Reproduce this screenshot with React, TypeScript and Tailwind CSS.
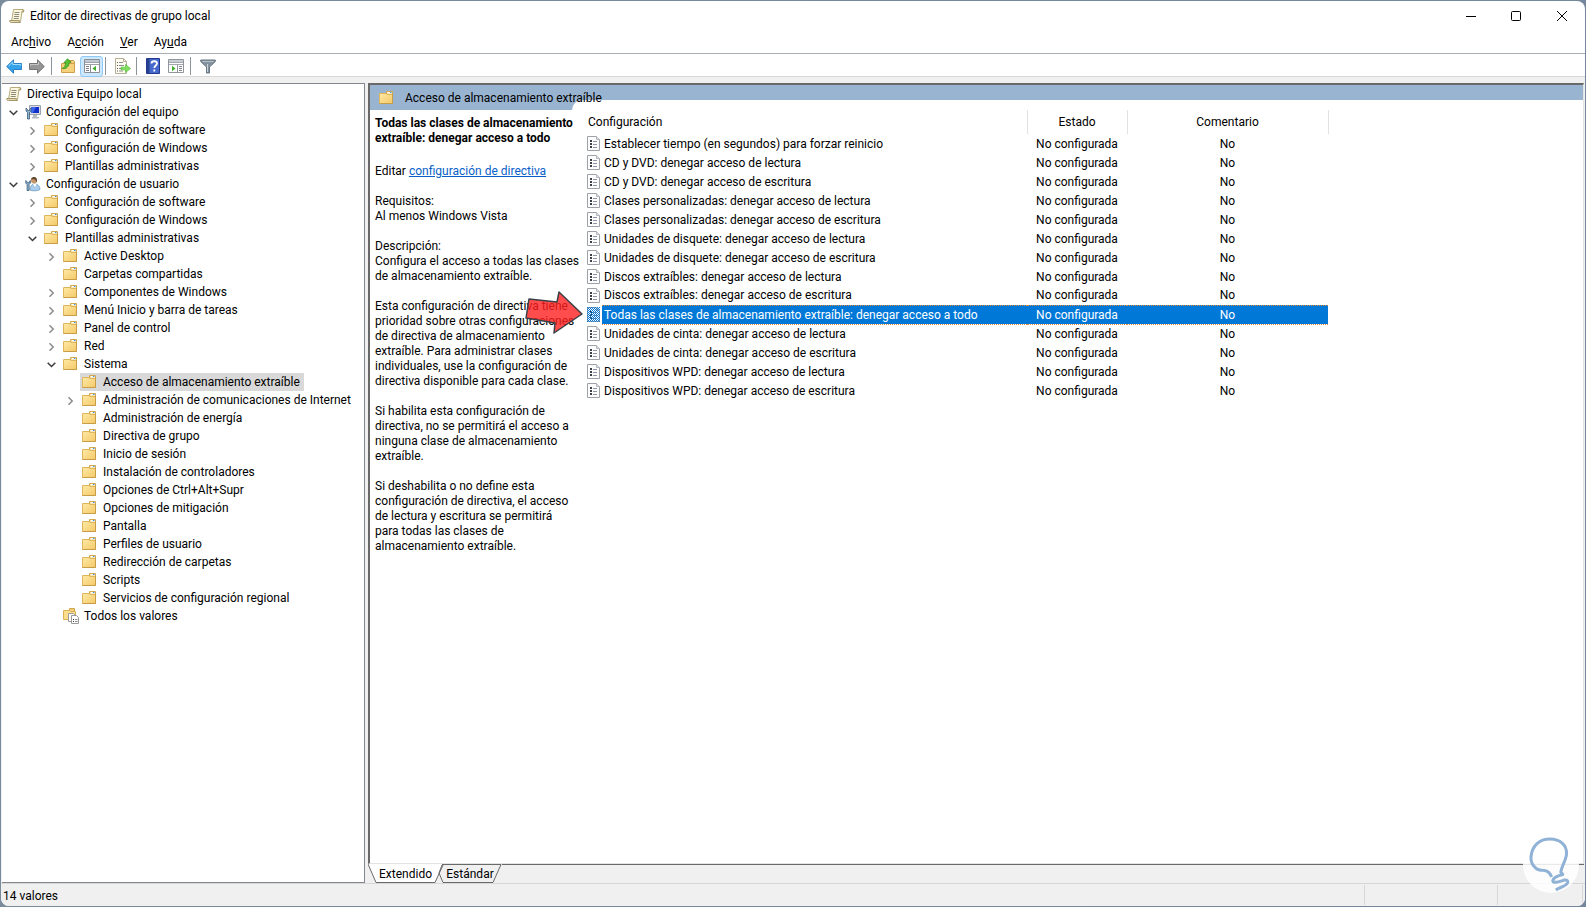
import React, { useState } from 'react';

type TreeItem = {
  label: string;
  level: number;
  icon: 'scroll' | 'computer' | 'user' | 'folder' | 'all';
  state?: 'open' | 'closed';
};

const tree: TreeItem[] = [
  { label: 'Directiva Equipo local', level: 0, icon: 'scroll' },
  { label: 'Configuración del equipo', level: 1, icon: 'computer', state: 'open' },
  { label: 'Configuración de software', level: 2, icon: 'folder', state: 'closed' },
  { label: 'Configuración de Windows', level: 2, icon: 'folder', state: 'closed' },
  { label: 'Plantillas administrativas', level: 2, icon: 'folder', state: 'closed' },
  { label: 'Configuración de usuario', level: 1, icon: 'user', state: 'open' },
  { label: 'Configuración de software', level: 2, icon: 'folder', state: 'closed' },
  { label: 'Configuración de Windows', level: 2, icon: 'folder', state: 'closed' },
  { label: 'Plantillas administrativas', level: 2, icon: 'folder', state: 'open' },
  { label: 'Active Desktop', level: 3, icon: 'folder', state: 'closed' },
  { label: 'Carpetas compartidas', level: 3, icon: 'folder' },
  { label: 'Componentes de Windows', level: 3, icon: 'folder', state: 'closed' },
  { label: 'Menú Inicio y barra de tareas', level: 3, icon: 'folder', state: 'closed' },
  { label: 'Panel de control', level: 3, icon: 'folder', state: 'closed' },
  { label: 'Red', level: 3, icon: 'folder', state: 'closed' },
  { label: 'Sistema', level: 3, icon: 'folder', state: 'open' },
  { label: 'Acceso de almacenamiento extraíble', level: 4, icon: 'folder' },
  { label: 'Administración de comunicaciones de Internet', level: 4, icon: 'folder', state: 'closed' },
  { label: 'Administración de energía', level: 4, icon: 'folder' },
  { label: 'Directiva de grupo', level: 4, icon: 'folder' },
  { label: 'Inicio de sesión', level: 4, icon: 'folder' },
  { label: 'Instalación de controladores', level: 4, icon: 'folder' },
  { label: 'Opciones de Ctrl+Alt+Supr', level: 4, icon: 'folder' },
  { label: 'Opciones de mitigación', level: 4, icon: 'folder' },
  { label: 'Pantalla', level: 4, icon: 'folder' },
  { label: 'Perfiles de usuario', level: 4, icon: 'folder' },
  { label: 'Redirección de carpetas', level: 4, icon: 'folder' },
  { label: 'Scripts', level: 4, icon: 'folder' },
  { label: 'Servicios de configuración regional', level: 4, icon: 'folder' },
  { label: 'Todos los valores', level: 3, icon: 'all' },
];

const policies = [
  'Establecer tiempo (en segundos) para forzar reinicio',
  'CD y DVD: denegar acceso de lectura',
  'CD y DVD: denegar acceso de escritura',
  'Clases personalizadas: denegar acceso de lectura',
  'Clases personalizadas: denegar acceso de escritura',
  'Unidades de disquete: denegar acceso de lectura',
  'Unidades de disquete: denegar acceso de escritura',
  'Discos extraíbles: denegar acceso de lectura',
  'Discos extraíbles: denegar acceso de escritura',
  'Todas las clases de almacenamiento extraíble: denegar acceso a todo',
  'Unidades de cinta: denegar acceso de lectura',
  'Unidades de cinta: denegar acceso de escritura',
  'Dispositivos WPD: denegar acceso de lectura',
  'Dispositivos WPD: denegar acceso de escritura',
];

const FolderIcon = () => (
  <svg width="16" height="16" viewBox="0 0 16 16" className="shrink-0">
    <defs>
      <linearGradient id="folder" x1="0" y1="0" x2="1" y2="1">
        <stop offset="0" stopColor="#ffe9a6" />
        <stop offset="1" stopColor="#f3c968" />
      </linearGradient>
    </defs>
    <path d="M7.500 4V1.500h6V6H7.500z" fill="#f2cf7c" stroke="#d3a74b" />
    <path d="M8.500 2h4.500v1.500H8.500z" fill="#fff" />
    <path d="M11 2h1.500v1H11z" fill="#3f8fe0" />
    <path d="M.5 3.500h6.500l1 1h5.500v9H.5z" fill="url(#folder)" stroke="#e0b65c" />
    <path d="M.5 13.500h13V4" fill="none" stroke="#c99d45" />
  </svg>
);

const ScrollIcon = () => (
  <svg width="16" height="16" viewBox="0 0 16 16" className="shrink-0">
    <path d="M4.500 1.500h9c1 0 1.500 1 1 2h-1.500l-1.500 10H2.500z" fill="#fbf6df" stroke="#b9ab7c" />
    <path d="M13 1.500c1.500-.3 2 .8 1.600 2.500H12.500" fill="#dccf9c" stroke="#a3966a" />
    <path d="M.8 12.500h9.500c-.3 1.500.2 2 1.200 2h-9c-1.400 0-2-.8-1.700-2z" fill="#e6dab0" stroke="#a3966a" />
    <path d="M5.500 4.500h5M5.200 6.500h5M5 8.500h5M4.700 10.500h5" stroke="#8f8a78" />
  </svg>
);

const ComputerIcon = () => (
  <svg width="16" height="16" viewBox="0 0 16 16" className="shrink-0">
    <path d="M4.500 1.500h11v9h-11z" fill="#d9dde2" stroke="#9aa2ac" />
    <path d="M6 3h8v6H6z" fill="#1230c8" />
    <path d="M6 3h5L8 9H6z" fill="#3d66ea" />
    <path d="M8 11h4v2H8zM7 13h7v1.500H7z" fill="#b5bac1" />
    <path d="M1 4v3l1.500 1.500V15h2V8.500L6 7V4L4.500 5.500v1h-2v-1z" fill="#8eb4d2" stroke="#3c5a76" strokeWidth=".8" />
  </svg>
);

const UserIcon = () => (
  <svg width="16" height="16" viewBox="0 0 16 16" className="shrink-0">
    <path d="M5 14c0-4 2-6 5-6s5 2.500 5 5.500c-2 1.500-8 1.800-10 .5z" fill="#a9cdea" stroke="#6d9cc4" strokeWidth=".8" />
    <path d="M8 8l2 3 1.500-3z" fill="#fff" />
    <circle cx="9" cy="4.500" r="3" fill="#c7976a" />
    <path d="M5.800 4C6 1.500 8 .7 9.500 1c2 .3 3 2.500 2.300 5-.8-.3-1-2-1.800-2.600C8.600 3.500 7 3 5.800 4z" fill="#5d4630" />
    <path d="M.8 4.500v2.700l1.300 1.300V14.500h2V8.500l1.300-1.300V4.500L4 6v.8H2.300V6z" fill="#8eb4d2" stroke="#3c5a76" strokeWidth=".8" />
  </svg>
);

const AllSettingsIcon = () => (
  <svg width="16" height="16" viewBox="0 0 16 16" className="shrink-0">
    <path d="M6.500 3V.5h5V3" fill="#f2cf7c" stroke="#d3a74b" />
    <path d="M.5 2.500h6l1 1h5V11.500H.5z" fill="#fbdd8b" stroke="#dcb155" />
    <path d="M5.500 5.500h5l2 2v6h-7z" fill="#fff" stroke="#9a9a9a" />
    <path d="M8.500 7.500h5l2 2v6h-7z" fill="#fff" stroke="#9a9a9a" />
    <path d="M10 11.500h1M10 13.500h1" stroke="#333" />
    <path d="M12 11.500h2.500M12 13.500h2.500" stroke="#888" />
  </svg>
);

const PolicyIcon = ({ selected }: { selected: boolean }) => (
  <svg width="13" height="15" viewBox="0 0 13 15">
    <defs>
      <pattern id="dither" width="2" height="2" patternUnits="userSpaceOnUse">
        <path d="M0 0h1v1H0zM1 1h1v1H1z" fill="#0078d7" />
      </pattern>
    </defs>
    <path d="M.5.5h9l3 3v11H.5z" fill="#fdfdfd" stroke="#9da1a8" />
    <path d="M9.500.5v3h3" fill="#e4e6ea" stroke="#b4b8be" />
    <path d="M3 4h2v2H3zM3 7h2v2H3zM3 10h2v2H3z" fill="#3c3f45" />
    <path d="M6 5.500h4M6 8.500h4M6 11.500h4" stroke="#8a94a6" />
    {selected && <path d="M0 0h13v15H0z" fill="url(#dither)" />}
  </svg>
);

const icons = {
  scroll: <ScrollIcon />,
  computer: <ComputerIcon />,
  user: <UserIcon />,
  folder: <FolderIcon />,
  all: <AllSettingsIcon />,
};

const Chevron = ({ open }: { open: boolean }) => (
  <svg width="9" height="9" viewBox="0 0 9 9" fill="none">
    {open ? (
      <path d="M.7 2.700l3.800 3.800 3.800-3.800" stroke="#3b3b3b" strokeWidth="1.500" />
    ) : (
      <path d="M2.500 1.300l3.700 3.700-3.700 3.700" stroke="#8b8b8b" strokeWidth="1.500" />
    )}
  </svg>
);

const Separator = () => <span className="h-[18px] w-px bg-[#8d939b]" />;

const Toolbar = () => (
  <div className="flex h-[23px] items-center border-b border-[#d8d8d8] pt-0.5 pl-[5px]">
    <button aria-label="Atrás" className="mr-[7px]">
      <svg width="16" height="15" viewBox="0 0 16 15">
        <path d="M.7 7.500L7.500 .8V4.500h8v6h-8v3.700z" fill="#35a3ea" stroke="#2c7fc4" />
        <path d="M2.500 7L6.700 3v2.500h8v1.500" fill="none" stroke="#9bdcfb" />
      </svg>
    </button>
    <button aria-label="Adelante">
      <svg width="16" height="15" viewBox="0 0 16 15">
        <path d="M15.300 7.500L8.500 .8V4.500h-8v6h8v3.700z" fill="#969696" stroke="#747474" />
        <path d="M1.500 7V5.500h8V3" fill="none" stroke="#c6c6c6" />
      </svg>
    </button>
    <span className="flex w-[13px] justify-center"><Separator /></span>
    <button aria-label="Subir un nivel" className="mr-1 ml-0.5">
      <svg width="16" height="16" viewBox="0 0 16 16">
        <path d="M8.500 4V2.500h5l1 1V6h-6z" fill="#f2cf7c" stroke="#c99d45" />
        <path d="M1.500 5.500h13v9h-13z" fill="#f7d27c" stroke="#cfa04a" />
        <path d="M2 10.500C4.500 9.500 5.500 8 5.500 4.500L3.800 4.800 7.500.8l3.700 3.400-2 .3C9.200 8 6.500 11.500 2 10.500z" fill="#54c233" stroke="#318a1b" strokeWidth=".7" />
      </svg>
    </button>
    <button
      aria-label="Mostrar u ocultar el árbol de consola"
      aria-pressed="true"
      className="flex h-[21px] w-[23px] items-center justify-center rounded-[3px] border border-[#90c8f6] bg-[#cce8ff]"
    >
      <svg width="16" height="14" viewBox="0 0 16 14">
        <path d="M.5.5h15v13H.5z" fill="#fff" stroke="#8a8f98" />
        <path d="M1 1h14v2H1z" fill="#c4c9d1" />
        <path d="M1 3.500h14M1 5.500h14" stroke="#9ca1aa" />
        <path d="M6.500 6v8" stroke="#8a8f98" />
        <path d="M2 7.500h3M2 9.500h3M2 11.500h3" stroke="#7b8089" />
        <path d="M12 6.700v5.600L8.500 9.500z" fill="#3fae2a" />
      </svg>
    </button>
    <span className="flex w-[5px] justify-center"><Separator /></span>
    <button aria-label="Exportar lista" className="ml-[6px]">
      <svg width="17" height="16" viewBox="0 0 17 16">
        <path d="M1.500.5h8l3 3v12h-11z" fill="#fffdf2" stroke="#b5ae98" />
        <path d="M9.500.5v3h3" fill="none" stroke="#b5ae98" />
        <path d="M3 4.500h1M3 7.500h1M3 10.500h1M3 13h1" stroke="#555" />
        <path d="M5 4.500h4M5 7.500h5M5 10.500h2M5 13h4" stroke="#8e8e8e" />
        <path d="M7 9.200h4.500V6.500l5 4-5 4v-2.700H7z" fill="#7ee05c" stroke="#4cb032" strokeWidth=".6" />
      </svg>
    </button>
    <span className="flex w-[11px] justify-center"><Separator /></span>
    <button aria-label="Ayuda" className="mr-2 ml-1">
      <svg width="14" height="16" viewBox="0 0 14 16">
        <path d="M.5.5h13v15H.5z" fill="#4468cc" stroke="#24398c" />
        <path d="M1 1h2.500v14H1z" fill="#27408f" />
        <path d="M5.500 5.500c0-3 5.500-3 5.500 0 0 2-2.700 2-2.700 4.500M8.300 11.500v2" fill="none" stroke="#fff" strokeWidth="1.800" />
      </svg>
    </button>
    <button aria-label="Mostrar u ocultar el panel de acciones">
      <svg width="16" height="14" viewBox="0 0 16 14">
        <path d="M.5.5h15v13H.5z" fill="#fff" stroke="#8f949d" />
        <path d="M1 1h14v2H1z" fill="#c9cdd4" />
        <path d="M1 3.500h14M1 5.500h14" stroke="#a2a7b0" />
        <path d="M9.500 6v8" stroke="#8f949d" />
        <path d="M11 7.500h3M11 9.500h3M11 11.500h3" stroke="#7b8089" />
        <path d="M4 6.700v5.600l3.500-2.800z" fill="#3fae2a" />
      </svg>
    </button>
    <span className="flex w-[13px] justify-center"><Separator /></span>
    <button aria-label="Filtro" className="ml-[3px]">
      <svg width="16" height="15" viewBox="0 0 16 15">
        <path d="M.7 1h14.600v1.500L9.500 8v6H6.500V8L.7 2.500z" fill="#84929f" stroke="#68747f" />
        <path d="M2.500 2.500h11" stroke="#b8c2cb" />
        <path d="M7.500 5v8" stroke="#cbd4dc" />
      </svg>
    </button>
  </div>
);

const Tree = () => {
  const [selected, setSelected] = useState(16);

  return (
    <nav className="w-[363px] shrink-0 overflow-hidden border-t border-r border-b border-[#828790] bg-white pt-px">
      <ul>
        {tree.map((item, index) => (
          <li
            key={index}
            className="flex h-[18px]"
            style={{ paddingLeft: 2 + Math.max(item.level - 1, 0) * 19 }}
          >
            {item.level > 0 && (
              <span className="flex w-[19px] shrink-0 items-center pl-[5px]">
                {item.state && <Chevron open={item.state === 'open'} />}
              </span>
            )}
            <button
              onClick={() => setSelected(index)}
              className={`flex shrink-0 items-center gap-[5px] pr-1 pl-0.5 whitespace-nowrap ${
                selected === index ? 'bg-[#d9d9d9]' : ''
              }`}
            >
              {icons[item.icon]}
              {item.label}
            </button>
          </li>
        ))}
      </ul>
    </nav>
  );
};

const Description = () => (
  <section className="relative z-10 w-[202px] shrink-0 pt-[6px] pl-[5px] leading-[15px] whitespace-nowrap">
    <h2 className="font-bold">
      Todas las clases de almacenamiento<br />
      extraíble: denegar acceso a todo
    </h2>
    <p className="mt-[18px]">
      Editar <a href="#editar" className="text-[#0a5fc8] underline">configuración de directiva</a>
    </p>
    <p className="mt-[15px]">Requisitos:<br />Al menos Windows Vista</p>
    <p className="mt-[15px]">
      Descripción:<br />
      Configura el acceso a todas las clases<br />
      de almacenamiento extraíble.
    </p>
    <p className="mt-[15px]">
      Esta configuración de directiva tiene<br />
      prioridad sobre otras configuraciones<br />
      de directiva de almacenamiento<br />
      extraíble. Para administrar clases<br />
      individuales, use la configuración de<br />
      directiva disponible para cada clase.
    </p>
    <p className="mt-[15px]">
      Si habilita esta configuración de<br />
      directiva, no se permitirá el acceso a<br />
      ninguna clase de almacenamiento<br />
      extraíble.
    </p>
    <p className="mt-[15px]">
      Si deshabilita o no define esta<br />
      configuración de directiva, el acceso<br />
      de lectura y escritura se permitirá<br />
      para todas las clases de<br />
      almacenamiento extraíble.
    </p>
  </section>
);

const PolicyTable = () => {
  const [selected, setSelected] = useState(9);

  return (
    <div className="relative -mt-[10px] grow rounded-tl-[10px] bg-white pt-[10px]">
      <table className="w-[756px] table-fixed border-collapse">
        <colgroup>
          <col className="w-[30px]" />
          <col className="w-[425px]" />
          <col className="w-[100px]" />
          <col className="w-[201px]" />
        </colgroup>
        <thead>
          <tr className="h-[24px]">
            <th colSpan={2} className="border-r border-[#e2e2e2] p-0 pl-4 text-left font-normal">Configuración</th>
            <th className="border-r border-[#e2e2e2] p-0 font-normal">Estado</th>
            <th className="border-r border-[#e2e2e2] p-0 font-normal">Comentario</th>
          </tr>
        </thead>
        <tbody>
          {policies.map((name, index) => {
            const active = selected === index;
            const cell = active
              ? 'p-0 pt-px bg-[#0078d7] text-white border-y border-dotted border-[#e08a3c]'
              : 'p-0 pt-px';
            return (
              <tr key={name} className="h-[19px] leading-[17px]" onClick={() => setSelected(index)}>
                <td className="p-0 pl-[15px]"><PolicyIcon selected={active} /></td>
                <td className={`${cell} whitespace-nowrap`}>
                  <span className="pl-[2px]">{name}</span>
                </td>
                <td className={`${cell} text-center`}>No configurada</td>
                <td className={`${cell} text-center`}>No</td>
              </tr>
            );
          })}
        </tbody>
      </table>
    </div>
  );
};

const Tabs = () => (
  <div className="flex h-[19px] bg-[#f0f0f0]">
    <button className="relative h-[19px] w-[75px] text-center leading-[21px]">
      <svg className="absolute inset-0" width="76" height="19" viewBox="0 0 76 19">
        <path d="M0 0h75L67 18.500H8z" fill="#fff" />
        <path d="M0 0l8 18.500h59L75 1" fill="none" stroke="#696969" />
      </svg>
      <span className="relative">Extendido</span>
    </button>
    <button className="relative -ml-[5px] h-[19px] w-[64px] text-center leading-[21px]">
      <svg className="absolute inset-0" width="64" height="19" viewBox="0 0 64 19">
        <path d="M1 9l4 9.500h50L63 .5H4" fill="none" stroke="#696969" />
        <path d="M4 1L1 9" stroke="#696969" />
      </svg>
      <span className="relative">Estándar</span>
    </button>
    <span className="grow border-t border-[#696969]" />
  </div>
);

const ResultPane = () => (
  <main className="mr-px ml-[3px] flex min-w-0 grow flex-col">
    <div className="relative flex min-h-0 grow flex-col overflow-hidden border-t-2 border-l-2 border-r border-b border-t-[#696969] border-l-[#696969] border-r-[#e3e3e3] border-b-[#e3e3e3] bg-white">
      <header className="flex h-[25px] shrink-0 items-center gap-[10px] bg-[#99b4d1] pl-[9px]">
        <FolderIcon />
        <h1 className="relative z-10 whitespace-nowrap">Acceso de almacenamiento extraíble</h1>
      </header>
      <div className="flex grow">
        <Description />
        <PolicyTable />
      </div>
      {/* pointer to the selected policy */}
      <svg className="absolute top-[204px] left-[154px] z-20" width="60" height="46" viewBox="0 0 60 46">
        <path d="M5 10l28 3 2-10 23 22-28 19 1-10-29-5z" fill="#ff1f1f" fillOpacity=".8" stroke="#3b4147" strokeWidth="1.500" strokeLinejoin="round" />
      </svg>
    </div>
    <Tabs />
  </main>
);

const App = () => (
  <div className="flex h-screen flex-col bg-linear-to-r from-[#7a8b9b] to-[#75879c] p-px font-[Roboto,'Noto_Sans',sans-serif] text-[12px] text-black">
    <div className="relative flex min-h-0 grow flex-col overflow-hidden rounded-lg bg-white">
      <div className="flex h-[29px] shrink-0 items-center pl-2">
        <ScrollIcon />
        <span className="ml-[5px] grow">Editor de directivas de grupo local</span>
        <button aria-label="Minimizar" className="flex w-[45px] justify-center">
          <svg width="10" height="10" viewBox="0 0 10 10"><path d="M0 5.500h10" stroke="#000" /></svg>
        </button>
        <button aria-label="Maximizar" className="flex w-[45px] justify-center">
          <svg width="10" height="10" viewBox="0 0 10 10"><rect x=".5" y=".5" width="9" height="9" rx="1" fill="none" stroke="#000" /></svg>
        </button>
        <button aria-label="Cerrar" className="flex w-[47px] justify-center">
          <svg width="10" height="10" viewBox="0 0 10 10"><path d="M0 0l10 10M10 0L0 10" stroke="#000" /></svg>
        </button>
      </div>
      <div className="flex h-[24px] shrink-0 items-center gap-4 border-b border-[#a9adb5] pl-[10px]">
        <button>Arc<u>h</u>ivo</button>
        <button>A<u>c</u>ción</button>
        <button><u>V</u>er</button>
        <button>Ay<u>u</u>da</button>
      </div>
      <Toolbar />
      <div className="flex min-h-0 grow bg-[#f0f0f0] pt-[6px] pl-px">
        <Tree />
        <ResultPane />
      </div>
      <footer className="flex h-[23px] shrink-0 items-center border-t border-[#d7d7d7] bg-[#f0f0f0] pl-[2px]">
        <span className="grow pt-0.5">14 valores</span>
        <span className="h-[20px] w-[133px] border-l border-[#d7d7d7]" />
        <span className="mr-0.5 h-[20px] w-[86px] border-x border-[#d7d7d7]" />
      </footer>
      <svg className="absolute right-[5px] bottom-3" width="58" height="58" viewBox="0 0 58 58">
        <circle cx="29" cy="29" r="28" fill="#fff" fillOpacity=".85" />
        <path
          d="M29.500 41c-1-3-3-6-7-6.500-3-.3-6-.3-8-1.800-4-3-6-7-5.500-12C10 10 17 3 28 3c10 0 17 6 16.500 15-.3 6-4.500 11-5.700 18l2 2.500c-4 1-9.500 3-10 6 .5 4 8 .5 12-.5 3-.5 4 2 2 4-3 3-6.500 3-11 6"
          fill="none" stroke="#8fb2d6" strokeWidth="3" strokeLinejoin="round"
        />
      </svg>
    </div>
  </div>
);

export default App;
